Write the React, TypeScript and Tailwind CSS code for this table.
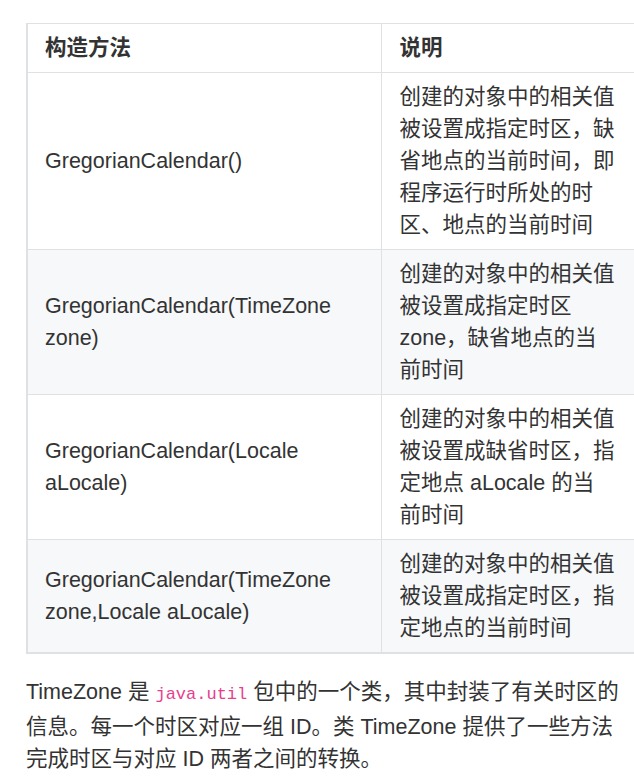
export default function App() {
  const rows = [
    {
      method: 'GregorianCalendar()',
      desc: ['创建的对象中的相关值', '被设置成指定时区，缺', '省地点的当前时间，即', '程序运行时所处的时', '区、地点的当前时间'],
    },
    {
      method: 'GregorianCalendar(TimeZone zone)',
      desc: ['创建的对象中的相关值', '被设置成指定时区', 'zone，缺省地点的当', '前时间'],
    },
    {
      method: 'GregorianCalendar(Locale aLocale)',
      desc: ['创建的对象中的相关值', '被设置成缺省时区，指', '定地点 aLocale 的当', '前时间'],
    },
    {
      method: 'GregorianCalendar(TimeZone zone,Locale aLocale)',
      desc: ['创建的对象中的相关值', '被设置成指定时区，指', '定地点的当前时间'],
    },
  ];

  return (
    <div
      className="w-[634px] h-[783px] overflow-hidden bg-white pt-[23px] pl-[26px] text-[#333] text-[21.5px] leading-[32px]"
      style={{ fontFamily: '"Liberation Sans", "Noto Sans CJK SC", sans-serif' }}
    >
      <table className="w-[609px] table-fixed border-collapse">
        <colgroup>
          <col className="w-[354px]" />
          <col className="w-[255px]" />
        </colgroup>
        <thead>
          <tr className="bg-white">
            <th className="border border-l-2 border-[#dfe2e5] pl-[17px] pr-[19px] py-[8px] text-left font-bold">构造方法</th>
            <th className="border border-[#dfe2e5] pl-[18px] pr-[19px] py-[8px] text-left font-bold">说明</th>
          </tr>
        </thead>
        <tbody>
          {rows.map((row, i) => (
            <tr key={i} className={i % 2 === 1 ? 'bg-[#f6f8fa]' : 'bg-white'}>
              <td
                className={`border border-l-2 border-[#dfe2e5] pl-[17px] pr-[19px] py-[8px] align-middle ${
                  i === rows.length - 1 ? 'border-b-2' : ''
                }`}
              >
                {row.method}
              </td>
              <td
                className={`border border-[#dfe2e5] pl-[18px] pr-[19px] py-[8px] align-middle whitespace-nowrap ${
                  i === rows.length - 1 ? 'border-b-2' : ''
                }`}
              >
                {row.desc.map((line, j) => (
                  <div key={j}>{line}</div>
                ))}
              </td>
            </tr>
          ))}
        </tbody>
      </table>

      <p className="mt-[22px] w-[620px] whitespace-nowrap">
        TimeZone 是{' '}
        <code className="text-[17px] text-[#e83e8c]" style={{ fontFamily: '"Liberation Mono", monospace' }}>
          java.util
        </code>{' '}
        包中的一个类，其中封装了有关时区的
        <br />
        信息。每一个时区对应一组 ID。类 TimeZone 提供了一些方法
        <br />
        完成时区与对应 ID 两者之间的转换。
      </p>
    </div>
  );
}
